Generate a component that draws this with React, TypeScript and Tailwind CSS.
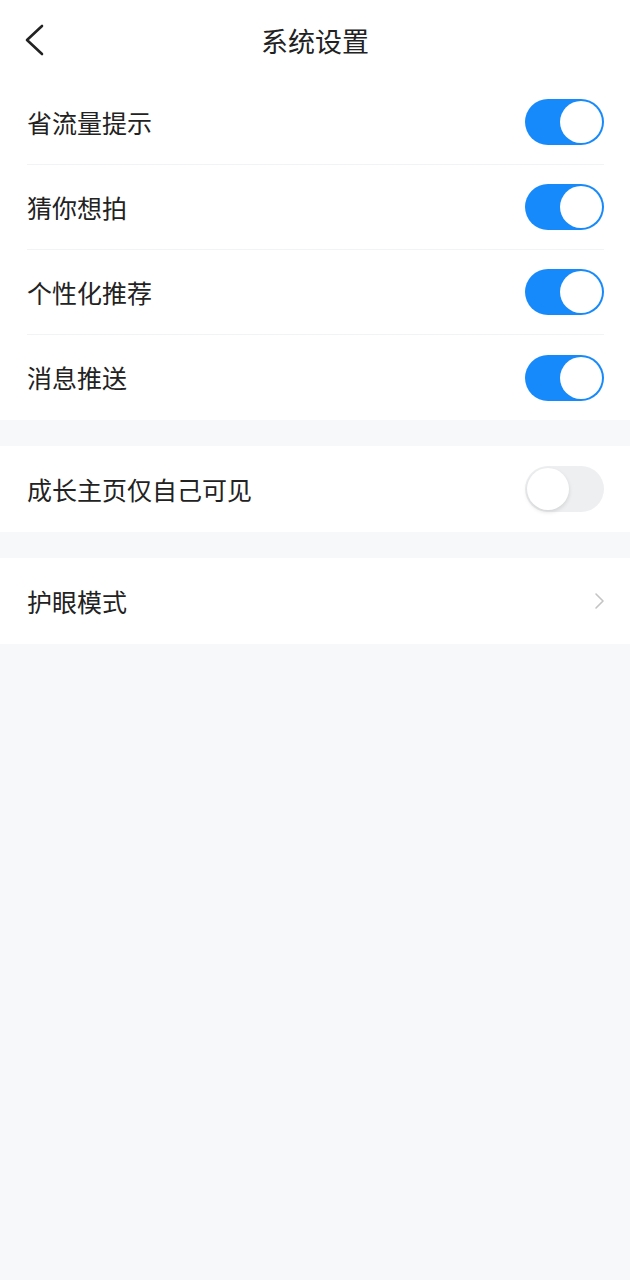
import React from "react";

const groups: { label: string; kind: "on" | "off" | "link" }[][] = [
  [
    { label: "省流量提示", kind: "on" },
    { label: "猜你想拍", kind: "on" },
    { label: "个性化推荐", kind: "on" },
    { label: "消息推送", kind: "on" },
  ],
  [{ label: "成长主页仅自己可见", kind: "off" }],
  [{ label: "护眼模式", kind: "link" }],
];

function Toggle({ on }: { on: boolean }) {
  return (
    <div
      className={`w-[79px] h-[46px] rounded-full p-[2px] flex ${
        on ? "bg-[#178afb] justify-end" : "bg-[#eeeff1] justify-start"
      }`}
    >
      <div
        className={`w-[42px] h-[42px] rounded-full bg-white ${
          on ? "" : "shadow-[0_2px_4px_rgba(0,0,0,0.12)]"
        }`}
      />
    </div>
  );
}

export default function App() {
  return (
    <div
      className="min-h-[1280px] bg-[#f7f8fa] text-[#222222]"
      style={{ fontFamily: '"Noto Sans CJK SC", "Noto Sans", sans-serif' }}
    >
      {/* Header */}
      <header className="h-[80px] bg-white relative flex items-center justify-center">
        <svg
          className="absolute left-[20px] top-[20px]"
          width="30"
          height="40"
          viewBox="0 0 30 40"
          fill="none"
        >
          <path
            d="M22 6 L7 20 L22 34"
            stroke="#222"
            strokeWidth="2.6"
            strokeLinecap="round"
            strokeLinejoin="round"
          />
        </svg>
        <h1 className="text-[27px] leading-none text-[#222]">系统设置</h1>
      </header>

      {groups.map((group, gi) => (
        <section key={gi} className={`bg-white ${gi > 0 ? "mt-[26px]" : ""}`}>
          {group.map((item, i) => (
            <div key={item.label} className="pl-[27px] pr-[26px]">
              <div
                className={`${gi === 0 ? "h-[85px]" : "h-[86px]"} flex items-center justify-between ${
                  i < group.length - 1 ? "border-b border-[#f2f3f5]" : ""
                }`}
              >
                <span className="text-[25px] leading-none">{item.label}</span>
                {item.kind === "link" ? (
                  <svg width="14" height="20" viewBox="0 0 14 20" fill="none" className="mr-[-2px]">
                    <path
                      d="M4 3 L11 10 L4 17"
                      stroke="#c4c4c6"
                      strokeWidth="1.6"
                      strokeLinecap="round"
                      strokeLinejoin="round"
                    />
                  </svg>
                ) : (
                  <Toggle on={item.kind === "on"} />
                )}
              </div>
            </div>
          ))}
        </section>
      ))}
    </div>
  );
}
